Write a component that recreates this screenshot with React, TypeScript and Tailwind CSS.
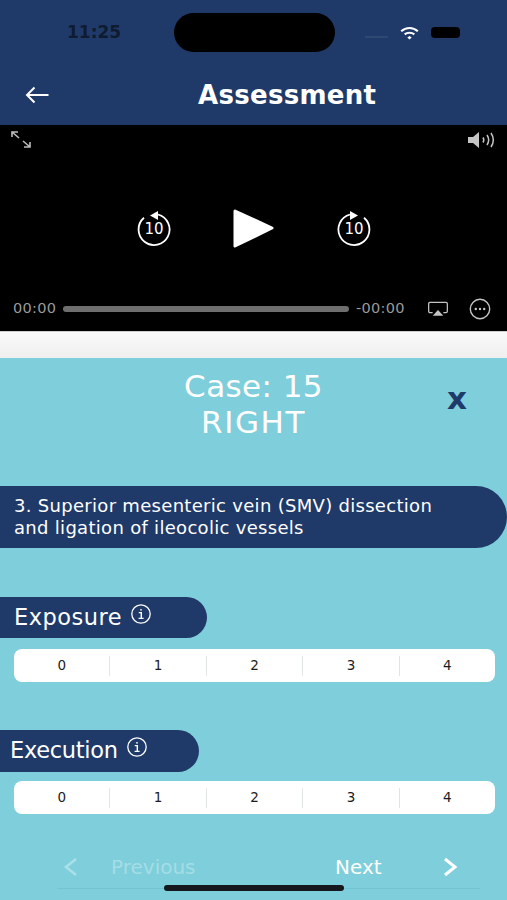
import React from "react";

const font = { fontFamily: "'DejaVu Sans', 'Liberation Sans', sans-serif" };

function Scale({ className }: { className: string }) {
  return (
    <div className={`ml-[14px] flex h-[33px] w-[481px] items-center rounded-[8px] bg-white ${className}`}>
      {[0, 1, 2, 3, 4].map((n, i) => (
        <div
          key={n}
          className={`flex h-[20px] flex-1 items-center justify-center text-[13.5px] text-[#1c1c1e] ${i < 4 ? "border-r border-[#e2e5e6]" : ""}`}
        >
          {n}
        </div>
      ))}
    </div>
  );
}

function Info() {
  return (
    <svg width="22" height="22" viewBox="0 0 22 22" fill="none" stroke="#fff" strokeWidth="1.3" className="ml-[8px] mt-[-8px]">
      <circle cx="11" cy="11" r="9.2" />
      <circle cx="11" cy="6.8" r="0.9" fill="#fff" stroke="none" />
      <path d="M8.8 9.6H11.3V15.2M8.6 15.4H13.6" strokeWidth="1.4" />
    </svg>
  );
}

function Replay({ flip }: { flip?: boolean }) {
  return (
    <div className="relative h-[36px] w-[36px]">
      <svg width="36" height="36" viewBox="0 0 36 36" fill="none" className={flip ? "-scale-x-100" : ""}>
        <path d="M22 4.5A15.5 15.5 0 1 1 8 7.7" stroke="#fff" strokeWidth="1.8" />
        <path d="M14 5.5L22 1V10Z" fill="#fff" />
      </svg>
      <span className="absolute inset-0 flex items-center justify-center pt-[3px] text-[15px] text-white">10</span>
    </div>
  );
}

export default function App() {
  return (
    <div style={font} className="flex h-[900px] w-[507px] flex-col overflow-hidden bg-[#7fcedb]">
      <header className="h-[125px] bg-[#1f3a68]">
        <div className="flex h-[64px] items-center pt-[1px]">
          <span className="ml-[67px] w-[107px] text-[17px] font-bold text-[#0f1b30]">11:25</span>
          <div className="h-[39px] w-[161px] rounded-full bg-black" />
          <div className="ml-[30px] flex items-center">
            <div className="mr-[11px] mt-[8px] h-[2px] w-[23px] bg-[#2e4872]" />
            <svg width="21" height="14" viewBox="0 0 22 16" className="mr-[11px]" fill="none" stroke="#fff" strokeWidth="2.4">
              <path d="M1.5 6C7 1 15 1 20.5 6" />
              <path d="M5.5 9.6C8.5 7 13.5 7 16.5 9.6" />
              <path d="M8.5 13L11 15.5L13.5 13L11 11.5Z" fill="#fff" stroke="none" />
            </svg>
            <div className="h-[11px] w-[29px] rounded-[4px] bg-black" />
          </div>
        </div>
        <div className="flex h-[61px] items-center">
          <svg width="24" height="18" viewBox="0 0 24 18" fill="none" stroke="#fff" strokeWidth="2" className="ml-[25px]">
            <path d="M23.5 9H2M9.5 1.5L2 9L9.5 16.5" />
          </svg>
          <h1 className="ml-[149px] pt-[1px] text-[26px] font-bold tracking-[0.3px] text-white">Assessment</h1>
        </div>
      </header>

      <section className="flex h-[206px] flex-col bg-black">
        <div className="flex h-[30px] items-start justify-between px-[10px] pt-[5px]">
          <svg width="22" height="20" viewBox="0 0 22 20" fill="none" stroke="#bdbdbd" strokeWidth="1.6">
            <path d="M2 2L9 8M2 7V2H8M20 17L13 11M20 12V17H14" />
          </svg>
          <svg width="30" height="20" viewBox="0 0 30 20" fill="none" stroke="#c4c4c4" strokeWidth="1.5">
            <path d="M1 7H6L12 2V18L6 13H1Z" fill="#c4c4c4" stroke="none" />
            <path d="M16 7.5C17 9 17 11 16 12.5M20 5C22 8 22 12 20 15M24 3C27 7.5 27 12.5 24 17" />
          </svg>
        </div>
        <div className="flex h-[143px] items-center pt-[3px]">
          <div className="ml-[136px]"><Replay /></div>
          <svg width="44" height="42" viewBox="0 0 44 42" className="ml-[60px]">
            <path d="M3 4L40 21L3 39Z" fill="#fff" stroke="#fff" strokeWidth="3" strokeLinejoin="round" />
          </svg>
          <div className="ml-[60px]"><Replay flip /></div>
        </div>
        <div className="flex h-[22px] items-center text-[14.5px] tracking-[0.3px] text-[#9a9a9a]">
          <span className="ml-[13px] w-[50px]">00:00</span>
          <div className="h-[6px] w-[286px] rounded-full bg-[#6e6e6e]" />
          <span className="ml-[7px] w-[57px]">-00:00</span>
          <svg width="22" height="16" viewBox="0 0 24 18" fill="none" stroke="#c4c4c4" strokeWidth="1.4" className="ml-[14px]">
            <path d="M6 13H3Q1.5 13 1.5 11.5V3Q1.5 1.5 3 1.5H21Q22.5 1.5 22.5 3V11.5Q22.5 13 21 13H18" />
            <path d="M12 10L18 16.5H6Z" fill="#c4c4c4" stroke="none" />
          </svg>
          <svg width="22" height="22" viewBox="0 0 22 22" fill="none" stroke="#c4c4c4" strokeWidth="1.4" className="ml-[20px]">
            <circle cx="11" cy="11" r="9.7" />
            <circle cx="6.8" cy="11" r="1.2" fill="#c4c4c4" stroke="none" />
            <circle cx="11" cy="11" r="1.2" fill="#c4c4c4" stroke="none" />
            <circle cx="15.2" cy="11" r="1.2" fill="#c4c4c4" stroke="none" />
          </svg>
        </div>
      </section>

      <div className="h-[27px] border-t border-[#cfcfcf] bg-gradient-to-b from-[#fafafa] to-[#efefef]" />

      <main className="flex flex-1 flex-col">
        <div className="relative mt-[10px] text-center text-[31px] leading-[36px] text-white">
          <div className="tracking-[0.4px]">Case: 15</div>
          <div className="tracking-[1.6px]">RIGHT</div>
          <span className="absolute left-[447px] top-[12px] text-[31px] font-bold leading-[36px] text-[#1f3a68]">x</span>
        </div>

        <div className="mt-[46px] flex h-[62px] items-center rounded-l-[12px] rounded-r-full bg-[#1f3a68] pl-[14px] pr-[40px] text-[18px] leading-[22px] tracking-[0.3px] text-white">
          3. Superior mesenteric vein (SMV) dissection and ligation of ileocolic vessels
        </div>

        <div className="mt-[49px] flex h-[41px] w-[207px] items-center rounded-r-full bg-[#1f3a68] pl-[14px] text-[22.5px] tracking-[0.5px] text-white">
          Exposure
          <Info />
        </div>
        <Scale className="mt-[11px]" />

        <div className="mt-[48px] flex h-[42px] w-[199px] items-center rounded-r-full bg-[#1f3a68] pl-[10px] text-[22.5px] tracking-[-0.3px] text-white">
          Execution
          <Info />
        </div>
        <Scale className="mt-[9px]" />

        <div className="mt-[41px] flex h-[23px] items-center text-[20px]">
          <svg width="16" height="20" viewBox="0 0 16 20" fill="none" stroke="#a9e0e9" strokeWidth="2.6" className="ml-[63px]">
            <path d="M13 2L3 10L13 18" />
          </svg>
          <span className="ml-[32px] w-[224px] text-[#a5dde6]">Previous</span>
          <span className="w-[107px] text-white">Next</span>
          <svg width="16" height="20" viewBox="0 0 16 20" fill="none" stroke="#fff" strokeWidth="3">
            <path d="M3 2L13 10L3 18" />
          </svg>
        </div>
        <div className="relative ml-[57px] mt-[10px] h-px w-[423px] bg-[#74c3d0]">
          <div className="absolute left-[107px] top-[-3px] h-[6px] w-[180px] rounded-full bg-[#15181c]" />
        </div>
      </main>
    </div>
  );
}
